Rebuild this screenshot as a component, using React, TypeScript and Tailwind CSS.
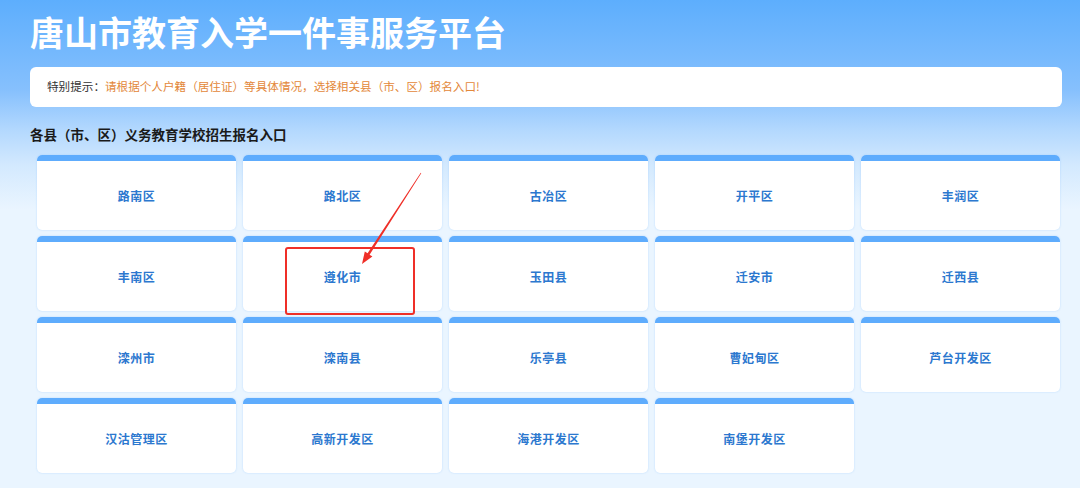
const districts = [
  "路南区",
  "路北区",
  "古冶区",
  "开平区",
  "丰润区",
  "丰南区",
  "遵化市",
  "玉田县",
  "迁安市",
  "迁西县",
  "滦州市",
  "滦南县",
  "乐亭县",
  "曹妃甸区",
  "芦台开发区",
  "汉沽管理区",
  "高新开发区",
  "海港开发区",
  "南堡开发区",
]

export default function App() {
  return (
    <div
      className="relative min-h-[488px] w-full overflow-hidden bg-[linear-gradient(180deg,#5daefd_0px,#86c0fd_90px,#b3d8fe_130px,#d3e9fe_165px,#eaf5ff_210px,#eaf5ff_100%)] pl-[30px] pr-[18px] pt-[11px]"
      style={{ fontFamily: '"Noto Sans CJK SC", "Noto Sans", sans-serif' }}
    >
      {/* Title */}
      <h1 className="h-[42px] text-[34px] font-bold leading-[42px] text-white">唐山市教育入学一件事服务平台</h1>

      {/* Notice */}
      <div className="mt-[14px] flex h-[40px] items-center rounded-[6px] bg-white pl-[17px] text-[11.6px]">
        <span className="text-[#333333]">特别提示：</span>
        <span className="text-[#e3883a]">请根据个人户籍（居住证）等具体情况，选择相关县（市、区）报名入口!</span>
      </div>

      {/* Section title */}
      <h2 className="mt-[17px] h-[20px] text-[13.5px] font-bold leading-[20px] text-[#1a1a1a]">
        各县（市、区）义务教育学校招生报名入口
      </h2>

      {/* District grid */}
      <div className="ml-[7px] mr-[2px] mt-[11px] grid grid-cols-5 gap-x-[7px] gap-y-[6px]">
        {districts.map((name) => (
          <div
            key={name}
            className="flex h-[75px] flex-col overflow-hidden rounded-[5px] bg-white shadow-[0_0_2px_rgba(94,172,253,0.35)]"
          >
            <div className="h-[6px] bg-[#5eacfd]" />
            <div className="flex flex-1 items-center justify-center text-[12px] font-bold tracking-[0.5px] text-[#2c78cf]">
              {name}
            </div>
          </div>
        ))}
      </div>

      {/* Annotation */}
      <div className="pointer-events-none absolute left-[285px] top-[247px] h-[68px] w-[130px] rounded-[3px] border-2 border-[#ef2f28]" />
      <svg className="pointer-events-none absolute left-0 top-0" width="1080" height="488" viewBox="0 0 1080 488">
        <polygon
          points="420.75,172.84 421.25,173.16 369.6,254.66 372.4,256.5 362,264 364.8,251.5 367.6,253.34"
          fill="#ef2f28"
        />
      </svg>
    </div>
  )
}
